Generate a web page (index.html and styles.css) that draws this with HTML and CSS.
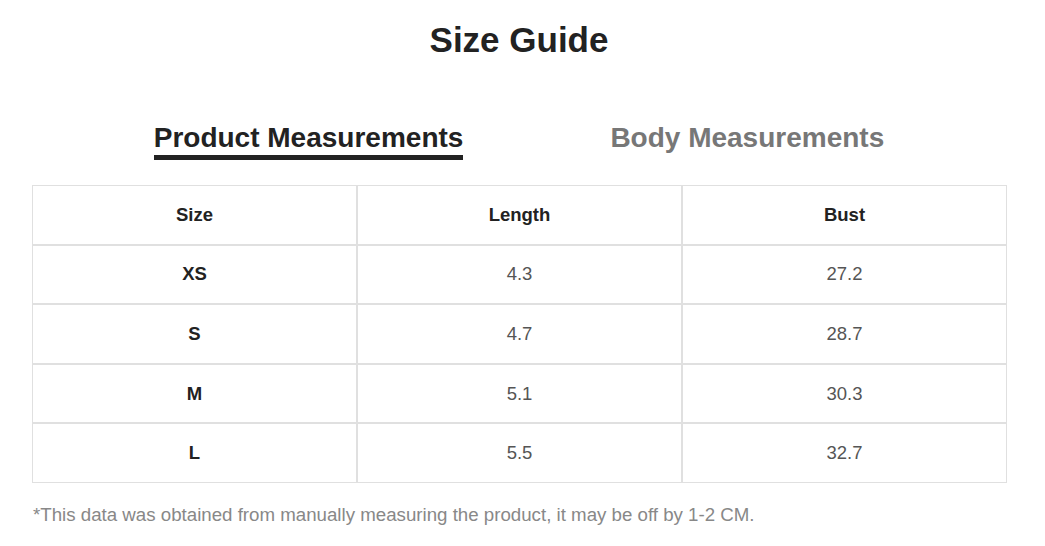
FILE: index.html
```html
<!DOCTYPE html>
<html>
<head>
<meta charset="utf-8">
<link rel="stylesheet" href="styles.css">
</head>
<body>
<div class="page">
  <h1 class="title">Size Guide</h1>
  <div class="tabs">
    <div class="tab active">Product Measurements</div>
    <div class="tab">Body Measurements</div>
  </div>
  <table class="sizes">
    <thead>
      <tr><th>Size</th><th>Length</th><th>Bust</th></tr>
    </thead>
    <tbody>
      <tr><td class="sz">XS</td><td>4.3</td><td>27.2</td></tr>
      <tr><td class="sz">S</td><td>4.7</td><td>28.7</td></tr>
      <tr><td class="sz">M</td><td>5.1</td><td>30.3</td></tr>
      <tr><td class="sz">L</td><td>5.5</td><td>32.7</td></tr>
    </tbody>
  </table>
  <p class="note">*This data was obtained from manually measuring the product, it may be off by 1-2 CM.</p>
</div>
</body>
</html>
```
FILE: styles.css
```css
html, body {
  margin: 0;
  padding: 0;
  background: #fff;
}
body {
  font-family: "Liberation Sans", Arial, sans-serif;
  color: #222;
}
.page {
  padding: 20px 39px 0 32px;
}
.title {
  margin: 0;
  text-align: center;
  font-size: 35px;
  font-weight: bold;
  line-height: 40px;
  color: #222;
}
.tabs {
  display: flex;
  justify-content: center;
  gap: 147px;
  margin-top: 61px;
}
.tab {
  font-size: 28px;
  font-weight: bold;
  color: #777;
  line-height: 34px;
  padding-bottom: 0;
  border-bottom: 5px solid transparent;
}
.tab.active {
  color: #222;
  border-bottom-color: #222;
}
.sizes {
  width: 975px;
  margin-top: 25px;
  border-collapse: separate;
  border-spacing: 0;
  table-layout: fixed;
}
.sizes th, .sizes td {
  border: 1px solid #e0e0e0;
  height: 59.6px;
  padding: 0;
  text-align: center;
  font-size: 18.5px;
  box-sizing: border-box;
}
.sizes th {
  font-weight: bold;
  color: #222;
}
.sizes td {
  color: #555;
}
.sizes td.sz {
  font-weight: bold;
  color: #222;
}
.note {
  margin: 21px 0 0 1px;
  font-size: 18.7px;
  color: #888;
}
```
